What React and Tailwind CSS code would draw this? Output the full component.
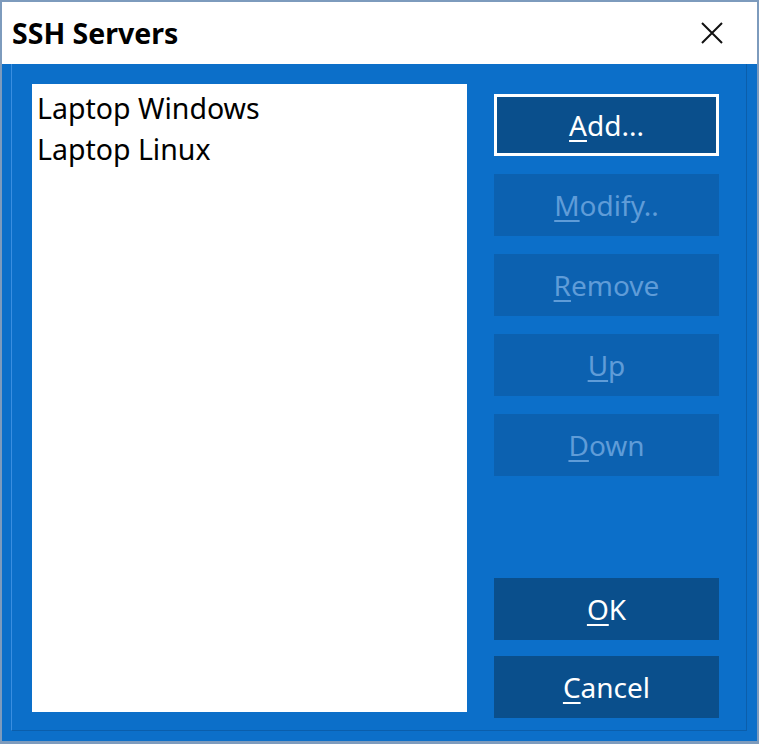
import React from "react";

function Btn({ label, mnemonic, disabled, focused }) {
  const rest = label.slice(1);
  return (
    <button
      className={`h-[62px] w-full text-[28px] leading-none flex items-center justify-center ${
        disabled
          ? "bg-[#0c61b0] text-[#5f9cd8]"
          : "bg-[#0a4f8c] text-white"
      } ${focused ? "border-[3px] border-white" : ""}`}
    >
      <span>
        <span className="underline underline-offset-[4px] decoration-[2px]">{mnemonic}</span>
        {rest}
      </span>
    </button>
  );
}

export default function App() {
  return (
    <div
      className="w-[759px] h-[744px] flex flex-col border-2 border-b-[3px] border-[#7d9bbd] bg-[#0c6fc9]"
      style={{ fontFamily: "'Noto Sans', 'Open Sans', sans-serif" }}
    >
      {/* Title bar */}
      <div className="h-[62px] bg-white flex items-center justify-between pl-[10px] pr-[34px] shrink-0">
        <span className="text-[28.5px] font-bold text-black">SSH Servers</span>
        <svg width="22" height="22" viewBox="0 0 22 22">
          <path d="M1 1 L21 21 M21 1 L1 21" stroke="#111" strokeWidth="2" />
        </svg>
      </div>

      {/* Body */}
      <div className="flex-1 flex pl-[9px] pr-[10px] pb-[10px]">
        <div className="flex-1 flex border-l border-r border-b border-l-[#3a8ee0] border-r-[#0b5eab] border-b-[#0b5eab] pl-[20px] pr-[27px] pt-[20px] pb-[12px]">
          <div className="w-[435px] h-[628px] bg-white pl-[5px] pt-[4px] text-[28.5px] leading-[41px] text-black">
            <div>Laptop Windows</div>
            <div>Laptop Linux</div>
          </div>
          <div className="ml-[27px] flex-1 flex flex-col pt-[10px]">
            <div className="flex flex-col gap-[18px]">
              <Btn label="Add..." mnemonic="A" focused />
              <Btn label="Modify.." mnemonic="M" disabled />
              <Btn label="Remove" mnemonic="R" disabled />
              <Btn label="Up" mnemonic="U" disabled />
              <Btn label="Down" mnemonic="D" disabled />
            </div>
            <div className="mt-auto flex flex-col gap-[16px]">
              <Btn label="OK" mnemonic="O" />
              <Btn label="Cancel" mnemonic="C" />
            </div>
          </div>
        </div>
      </div>
    </div>
  );
}
